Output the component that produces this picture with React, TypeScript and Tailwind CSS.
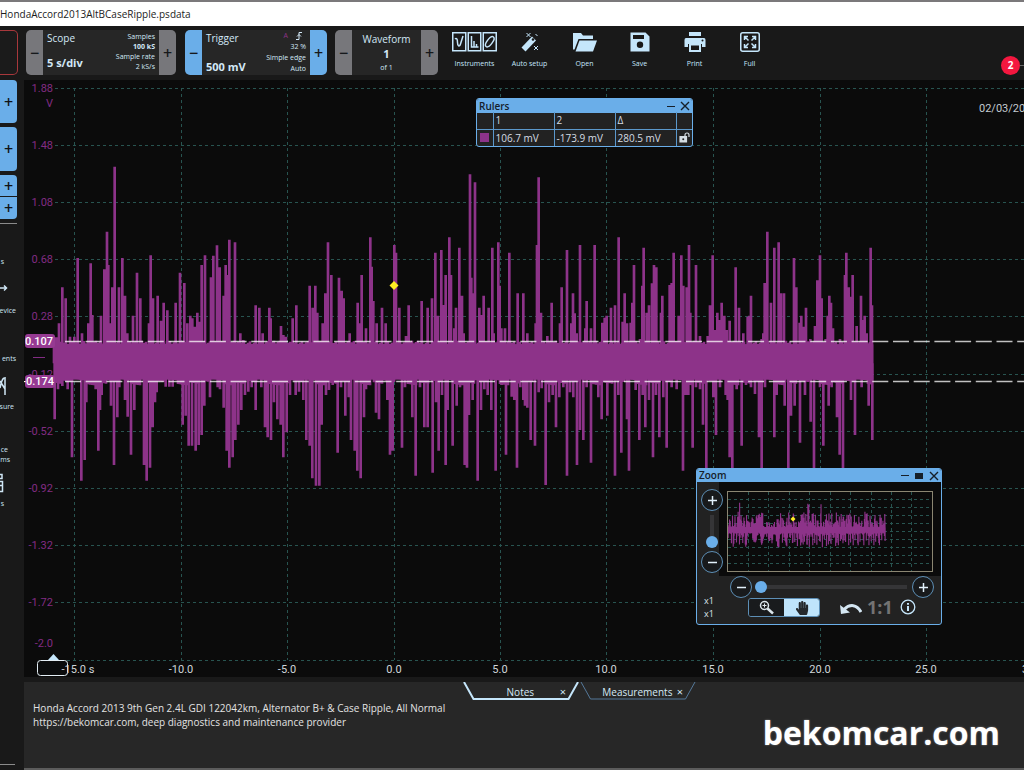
import type { ReactNode } from "react";
import clsx from "clsx";
import { FaHandPaper } from "react-icons/fa";

// Trace extremes as x, y pairs, three units to a pixel
const PEAKS_A = [
  12, 562, 20, 562, 27, 520, 37, 412, 47, 445, 60, 560, 73, 560, 83, 324, 96, 550, 115, 520, 122, 340, 127, 495,
  153, 497, 163, 358, 171, 245, 175, 345, 181, 520, 187, 412, 194, 50, 207, 412, 217, 324, 225, 437, 232, 550,
  249, 497, 261, 368, 271, 445, 297, 520, 302, 316, 309, 445, 323, 437, 333, 512, 341, 458, 352, 481, 377, 458,
  390, 368, 403, 399, 412, 520, 421, 497, 427, 505, 434, 530, 442, 488, 448, 515, 455, 345, 465, 316, 483, 382,
  490, 317, 501, 286, 509, 352, 521, 437, 527, 345, 533, 375, 538, 269, 555, 277, 571, 550, 580, 570, 617, 466,
  628, 473, 638, 550, 658, 473, 662, 505, 693, 528, 700, 555, 708, 560, 728, 505, 739, 466, 779, 407, 788, 473,
  796, 407, 802, 488, 818, 520, 826, 430, 834, 277, 844, 375, 867, 383, 875, 422, 881, 445, 899, 550, 923, 458,
  930, 520, 935, 375, 948, 535, 961, 262, 965, 350, 970, 453, 980, 520, 996, 473, 1007, 520, 1033, 285, 1038, 308,
  1048, 473, 1068, 558, 1076, 466, 1115, 453, 1133, 473, 1146, 445, 1156, 308, 1164, 497, 1174, 300, 1179, 465,
  1187, 375, 1198, 262, 1203, 375, 1213, 535, 1218, 473, 1228, 293, 1236, 437,
];
const PEAKS_B = [
  11, 550, 30, 73, 34, 383, 38, 430, 45, 97, 58, 473, 65, 495, 71, 437, 86, 473, 97, 293, 101, 550, 115, 277,
  119, 407, 124, 535, 135, 535, 148, 308, 173, 430, 190, 430, 202, 550, 227, 520, 231, 285, 236, 82, 243, 488,
  262, 558, 275, 458, 300, 520, 305, 412, 321, 300, 334, 520, 339, 430, 344, 490, 350, 550, 360, 285, 376, 535,
  380, 453, 393, 535, 404, 285, 427, 518, 434, 503, 440, 497, 453, 473, 465, 466, 476, 262, 488, 515, 494, 430,
  501, 520, 512, 518, 517, 458, 522, 345, 540, 567, 547, 407, 551, 293, 560, 488, 567, 466, 576, 400, 582, 345,
  589, 352, 603, 488, 607, 437, 629, 405, 635, 399, 641, 308, 656, 497, 664, 316, 670, 407, 680, 412, 687, 285,
  691, 488, 708, 345, 720, 558, 743, 558, 750, 466, 758, 316, 766, 540, 772, 488, 780, 510, 785, 458, 793, 497,
  800, 540, 809, 512, 827, 352, 837, 473, 850, 550, 863, 500, 868, 497, 873, 437, 905, 567, 910, 550, 914, 399,
  922, 245, 933, 458, 943, 293, 956, 277, 963, 430, 972, 430, 1002, 324, 1009, 412, 1019, 518, 1024, 497,
  1030, 530, 1038, 473, 1051, 567, 1065, 528, 1072, 391, 1080, 316, 1085, 445, 1097, 567, 1103, 497, 1108, 437,
  1113, 458, 1119, 535, 1140, 567, 1155, 375, 1159, 308, 1166, 412, 1172, 440, 1178, 375, 1190, 528, 1203, 437,
  1208, 510, 1214, 497, 1220, 550, 1232, 293, 1236, 466,
];
const DIPS_A = [
  14, 808, 24, 718, 37, 708, 53, 718, 66, 922, 94, 992, 104, 930, 109, 757, 137, 718, 145, 902, 150, 780, 155, 735,
  183, 767, 192, 945, 202, 802, 208, 712, 225, 750, 233, 800, 243, 914, 253, 780, 282, 945, 290, 992, 300, 953,
  308, 832, 315, 757, 320, 727, 347, 710, 358, 710, 368, 710, 398, 824, 407, 797, 416, 887, 426, 887, 437, 902,
  446, 885, 455, 855, 463, 767, 480, 742, 503, 712, 510, 718, 521, 773, 530, 902, 538, 953, 548, 922, 556, 870,
  565, 824, 574, 780, 585, 735, 595, 725, 605, 712, 617, 780, 634, 712, 645, 832, 653, 862, 663, 870, 672, 757,
  682, 808, 692, 824, 700, 922, 710, 847, 720, 735, 737, 735, 747, 725, 760, 750, 769, 870, 779, 887, 787, 985,
  798, 1007, 808, 1007, 815, 824, 828, 735, 837, 720, 848, 705, 863, 908, 873, 712, 886, 797, 896, 742, 903, 870,
  914, 902, 922, 962, 932, 985, 942, 802, 948, 718, 978, 788, 987, 808, 1012, 750, 1020, 914, 1028, 902, 1056, 893,
  1065, 712, 1087, 802, 1097, 977, 1110, 712, 1123, 832, 1133, 832, 1148, 968, 1158, 757, 1166, 902, 1176, 735,
  1187, 945, 1193, 780, 1208, 887, 1220, 767, 1230, 712,
];
const DIPS_B = [
  14, 945, 21, 953, 27, 795, 38, 750, 53, 992, 63, 780, 73, 718, 83, 735, 94, 780, 107, 962, 125, 705, 138, 914,
  155, 740, 163, 750, 171, 953, 181, 712, 190, 750, 195, 767, 202, 773, 212, 870, 225, 887, 236, 727, 245, 715,
  257, 1005, 267, 757, 278, 735, 288, 832, 298, 742, 310, 712, 321, 977, 330, 727, 340, 742, 351, 945, 360, 840,
  370, 870, 380, 712, 393, 938, 415, 742, 425, 808, 442, 797, 465, 977, 475, 735, 484, 908, 501, 808, 507, 962,
  527, 720, 538, 870, 548, 735, 556, 832, 567, 750, 579, 922, 588, 735, 598, 862, 610, 742, 620, 893, 635, 712,
  650, 718, 669, 962, 677, 735, 685, 735, 698, 893, 708, 712, 720, 718, 729, 824, 739, 960, 760, 742, 768, 855,
  780, 712, 797, 735, 803, 750, 809, 922, 817, 960, 830, 718, 845, 887, 858, 705, 873, 712, 885, 732, 897, 862,
  905, 960, 915, 712, 943, 862, 950, 735, 974, 767, 985, 960, 993, 797, 1004, 767, 1020, 878, 1035, 735, 1052, 815,
  1062, 960, 1080, 712, 1090, 887, 1106, 767, 1115, 712, 1131, 802, 1139, 914, 1149, 960, 1173, 750, 1185, 855,
  1205, 712, 1226, 767, 1237, 870,
];

function spikes(data: number[], offset: number) {
  let d = "";
  for (let i = 0; i < data.length; i += 2) {
    d += `M${data[i] + offset} 640V${data[i + 1]}`;
  }
  return d;
}

// small uneven edge along the solid band
function noise() {
  let d = "";
  for (let x = 18; x < 2468; x += 6) {
    const n = (x * 7919) % 23;
    d += `M${x} ${572 + (n % 12)}V${686 + ((n * 5) % 21)}`;
  }
  return d;
}

const TRACE =
  spikes(PEAKS_A, 0) + spikes(PEAKS_B, 1230) + spikes(DIPS_A, 0) + spikes(DIPS_B, 1230) + noise();

function Trace({ width }: { width: number }) {
  return (
    <g fill="#8d3389" stroke="#8d3389">
      <rect x="12" y="583" width="2458" height="106" stroke="none" />
      <path d={TRACE} fill="none" strokeWidth={width} />
    </g>
  );
}

const yLabels = [
  { y: 8, text: "1.88" },
  { y: 65, text: "1.48" },
  { y: 122, text: "1.08" },
  { y: 179, text: "0.68" },
  { y: 236, text: "0.28" },
  { y: 294, text: "-0.12" },
  { y: 351, text: "-0.52" },
  { y: 408, text: "-0.92" },
  { y: 465, text: "-1.32" },
  { y: 522, text: "-1.72" },
  { y: 563, text: "-2.0" },
];

const xLabels = [
  { x: 50, text: "-15.0 s" },
  { x: 157, text: "-10.0" },
  { x: 263, text: "-5.0" },
  { x: 370, text: "0.0" },
  { x: 476, text: "5.0" },
  { x: 582, text: "10.0" },
  { x: 689, text: "15.0" },
  { x: 796, text: "20.0" },
  { x: 902, text: "25.0" },
];

const gridRows = [8, 65, 122, 179, 236, 294, 351, 408, 465, 522, 580];

function Plot() {
  return (
    <svg className="block h-full w-full font-['Roboto',sans-serif] text-[11px]" role="img" aria-label="Channel A trace">
      <g stroke="#285450" strokeDasharray="3 3">
        {gridRows.map((y) => (
          <line key={y} x1="31" x2="100%" y1={y + 0.5} y2={y + 0.5} />
        ))}
        {xLabels.map(({ x }) => (
          <line key={x} x1={x + 0.5} x2={x + 0.5} y1="8" y2="580" />
        ))}
      </g>
      <g fill="#822c83" textAnchor="end">
        {yLabels.map(({ y, text }) => (
          <text key={text} x="29" y={y + 4}>{text}</text>
        ))}
        <text x="29" y="27">V</text>
      </g>
      <path d="M9 277.5h12" stroke="#822c83" />
      <g transform="translate(26 70) scale(0.33333)">
        <Trace width={8} />
      </g>
      <g stroke="#fff" strokeOpacity="0.75" strokeWidth="1.5" strokeDasharray="16 4.7">
        <line x1="41" x2="100%" y1="261.5" y2="261.5" />
        <line x1="41" x2="100%" y1="301.5" y2="301.5" />
      </g>
      <g fill="#963a92">
        <rect x="1" y="254" width="30" height="14" rx="3" />
        <rect x="1" y="295" width="30" height="13" rx="3" />
      </g>
      <g fill="#fff" textAnchor="end" fontWeight="500">
        <text x="29" y="265">0.107</text>
        <text x="30" y="305">-0.174</text>
      </g>
      <path d="M370 201l4.5 4.5-4.5 4.5-4.5-4.5z" fill="#ffee22" />
      <rect x="13.5" y="580.5" width="30" height="15" rx="3" fill="#0b0c0d" stroke="#e4eef5" />
      <path d="M24 580l5.500-6 5.500 6z" fill="#c5e6fb" />
      <g fill="#d0d6da" textAnchor="middle">
        {xLabels.map(({ x, text }) => (
          <text key={x} x={x === 50 ? 54 : x} y="593">{text}</text>
        ))}
        <text x="998" y="593" textAnchor="start">30.0</text>
      </g>
      <text x="955" y="32" fill="#c3cad0">02/03/2021</text>
    </svg>
  );
}

function Stepper({ tone, label, className, children }: { tone: "gray" | "blue"; label: string; className: string; children: ReactNode }) {
  const btn = clsx(
    "flex w-[17px] shrink-0 items-center justify-center text-base leading-none font-semibold text-[#16191c]",
    tone === "blue" ? "bg-[#6aaee9]" : "bg-[#77777b]",
  );
  return (
    <div className={clsx("flex h-[45px] overflow-hidden rounded-[5px] bg-[#262626] text-[#d3e8f7]", className)}>
      <button className={btn} aria-label={`${label} down`}>−</button>
      <div className="flex min-w-0 flex-1 justify-between px-1">{children}</div>
      <button className={btn} aria-label={`${label} up`}>+</button>
    </div>
  );
}

function Tool({ label, className, children }: { label: string; className?: string; children: ReactNode }) {
  return (
    <button className={clsx("flex w-[55px] flex-col items-center text-[#c5e6fb]", className)}>
      <span className="flex h-5 items-center">{children}</span>
      <span className="mt-[7px] text-[7px] leading-[10px] whitespace-nowrap">{label}</span>
    </button>
  );
}

function Toolbar() {
  return (
    <header className="flex h-[54px] items-start overflow-hidden bg-[#191919] pt-1">
      <button aria-label="Stop" className="h-[45px] w-[18px] shrink-0 rounded-r-[5px] border border-l-0 border-[#a8383c] bg-[#1b1b1b]" />
      <Stepper tone="gray" label="Scope" className="ml-2 w-[150px] shrink-0">
        <div className="flex flex-col justify-between pb-1">
          <span className="text-[10px] leading-4">Scope</span>
          <b className="text-[11px] leading-4">5 s/div</b>
        </div>
        <div className="pt-0.5 text-right text-[7px] leading-[10px]">
          <div>Samples</div>
          <b>100 kS</b>
          <div>Sample rate</div>
          <div>2 kS/s</div>
        </div>
      </Stepper>
      <Stepper tone="blue" label="Trigger" className="ml-[9px] w-[142px] shrink-0">
        <div className="flex flex-col justify-between">
          <span className="text-[10px] leading-4">Trigger</span>
          <b className="text-[11px] leading-4 whitespace-nowrap">500 mV</b>
        </div>
        <div className="text-right text-[7px] leading-[11px]">
          <div className="flex items-center justify-end gap-2 pr-1">
            <span className="text-[#8d3389]">A</span>
            <svg width="6" height="8" viewBox="0 0 6 8" fill="none" stroke="currentColor">
              <path d="M0 7.500h3V.5h3M1 4.500l2-2 2 2" />
            </svg>
          </div>
          <div>32 %</div>
          <div className="whitespace-nowrap">Simple edge</div>
          <div>Auto</div>
        </div>
      </Stepper>
      <Stepper tone="gray" label="Waveform" className="ml-2 w-[103px] shrink-0">
        <div className="w-full pt-0.5 text-center">
          <div className="text-[10px] leading-[14px]">Waveform</div>
          <b className="block text-[11px] leading-4">1</b>
          <div className="text-[7px] leading-3">of 1</div>
        </div>
      </Stepper>
      <nav className="ml-[9px] flex shrink-0 pt-0.5">
        <Tool label="Instruments">
          <svg width="45" height="20" viewBox="0 0 45 20" fill="none" stroke="currentColor" strokeWidth="1.500">
            <path d="M.75.75h13v18h-13zM16.250.75h12.500v18H16.250zM31.250.75h13v18h-13z" />
            <path d="M3 7c1.500-1.500 2.500 0 2.500 3.500s2 5 3 1.500l2.500-8M19.500 4v11h7M22 15V9M24.500 15v-3" />
            <ellipse cx="37.750" cy="9.750" rx="2.600" ry="6" transform="rotate(38 37.750 9.750)" />
          </svg>
        </Tool>
        <Tool label="Auto setup">
          <svg width="20" height="20" viewBox="0 0 20 20" fill="none" stroke="currentColor">
            <path d="M3.500 17.500L14 6.500" strokeWidth="5.500" />
            <circle cx="13" cy="7.500" r="1.300" fill="#191919" stroke="none" />
            <path d="M6.500 1l4 4M10.500 1l-4 4M14 14l4 4M18 14l-4 4M15.500 2l2 2" />
          </svg>
        </Tool>
        <Tool label="Open">
          <svg width="24" height="20" viewBox="0 0 24 20" fill="currentColor">
            <path d="M0 1h8l2 2.500h10V7H5.500L1.500 17.500H0z" />
            <path d="M6.500 8.500H24L20 19.500H2.500z" />
          </svg>
        </Tool>
        <Tool label="Save">
          <svg width="20" height="20" viewBox="0 0 20 20" fill="currentColor">
            <path d="M.5.5h15l4 4v15H.5zM3 3v4h11V3zM10 9.500a3.200 3.200 0 100 6.400 3.200 3.200 0 000-6.400z" fillRule="evenodd" />
          </svg>
        </Tool>
        <Tool label="Print">
          <svg width="22" height="20" viewBox="0 0 22 20" fill="currentColor">
            <path d="M5 0h12v4H5zM2 6h18q1.500 0 1.500 2v7H18v-3H4v3H.5V8Q.5 6 2 6z" />
            <path d="M5 12h12v8H5zM7 13.500v4.500h8v-4.500z" fillRule="evenodd" />
            <circle cx="18.500" cy="8.500" r="1" fill="#191919" />
          </svg>
        </Tool>
        <Tool label="Full">
          <svg width="20" height="20" viewBox="0 0 20 20" fill="none" stroke="currentColor" strokeWidth="1.500">
            <rect x=".75" y=".75" width="18.500" height="18.500" rx="2" />
            <path d="M4.500 8V4.500H8M4.500 4.500l4 4M12 4.500h3.500V8M15.500 4.500l-4 4M4.500 12v3.500H8M4.500 15.500l4-4M15.500 12v3.500H12M15.500 15.500l-4-4" />
          </svg>
        </Tool>
      </nav>
      <div className="mt-[26px] ml-auto flex items-center">
        <span className="flex size-[19px] items-center justify-center rounded-full bg-[#f4173f] text-[10px] font-bold text-white">2</span>
        <span className="h-px w-1 bg-[#666]" />
      </div>
    </header>
  );
}

function Sidebar() {
  const plus = "flex w-[17px] items-center justify-center bg-[#6aaee9] text-base leading-none font-semibold text-[#101316]";
  return (
    <aside className="flex w-6 shrink-0 flex-col bg-[#191919] text-[7px] leading-[10px] text-[#cfe6f5]">
      <button className={clsx(plus, "h-[43px] rounded-r")} aria-label="Channel A">+</button>
      <button className={clsx(plus, "mt-1 h-11 rounded-r")} aria-label="Channel B">+</button>
      <button className={clsx(plus, "mt-1 h-[21px] rounded-tr")} aria-label="Channel C">+</button>
      <button className={clsx(plus, "mt-px h-[22px] rounded-br")} aria-label="Channel D">+</button>
      <div className="mt-1 h-px w-[17px] bg-[#8b8b8b]" />
      <div className="flex w-4 flex-col items-end">
        <span className="mt-[33px] mr-3">s</span>
        <svg className="mt-4 mr-2" width="8" height="10" viewBox="0 0 8 10" fill="none" stroke="currentColor" strokeWidth="1.500">
          <path d="M0 5h6M4 2.500L6.500 5 4 7.500" />
        </svg>
        <span className="mt-[13px]">evice</span>
        <span className="mt-[38px]">ents</span>
        <svg className="mt-3 mr-2.5" width="6" height="20" viewBox="0 0 6 20" fill="none" stroke="currentColor" strokeWidth="1.500">
          <path d="M0 5l5 8M5 1v18M0 12c1-5 2-9 4-10" />
        </svg>
        <span className="mt-1.5 mr-0.5">sure</span>
        <span className="mt-[33px] mr-2">ce</span>
        <span className="mr-1.5">ms</span>
        <svg className="mt-2 mr-3" width="4" height="20" viewBox="0 0 4 20" fill="none" stroke="currentColor">
          <path d="M0 1.500h2v4H0M0 8.500h2.500v10H0M0 12.500h2.500" strokeWidth="1.500" />
        </svg>
        <span className="mt-1.5 mr-3">s</span>
      </div>
      <div className="mt-auto mb-[5px] h-px w-[15px] bg-[#8b8b8b]" />
    </aside>
  );
}

function RulersWindow() {
  const cell = "h-[17px] border border-[#5b98cc] px-0.5";
  return (
    <section className="absolute top-[18px] left-[452px] w-[217px] overflow-hidden rounded-[3px] border border-[#6aaee9] bg-[#222222] text-[10px] text-[#d5dde3]">
      <div className="flex h-[14px] items-center bg-[#6aaee9] pl-0.5 text-[#16202a]">
        <h2 className="flex-1 text-[10px] leading-[13px] font-semibold">Rulers</h2>
        <button aria-label="Minimise rulers" className="mr-[5px] h-px w-2 bg-[#16202a]" />
        <button aria-label="Close rulers" className="mr-0.5">
          <CloseIcon />
        </button>
      </div>
      <table className="-mt-px w-full table-fixed border-collapse border-hidden leading-4">
        <colgroup>
          <col className="w-4" />
          <col />
          <col />
          <col />
          <col className="w-4" />
        </colgroup>
        <tbody>
          <tr>
            <td className={cell} />
            <th className={clsx(cell, "text-left font-normal")}>1</th>
            <th className={clsx(cell, "text-left font-normal")}>2</th>
            <th className={clsx(cell, "text-left font-normal")}>Δ</th>
            <td className={cell} />
          </tr>
          <tr>
            <td className={cell}><div className="mx-auto size-[9px] bg-[#8d3389]" /></td>
            <td className={cell}>106.7 mV</td>
            <td className={cell}>-173.9 mV</td>
            <td className={cell}>280.5 mV</td>
            <td className={cell}>
              <button aria-label="Lock rulers" className="block">
                <svg width="11" height="11" viewBox="0 0 11 11" fill="none" stroke="currentColor" strokeWidth="1.200">
                  <path d="M1 4.500h6.500v5.500H1z" fill="currentColor" />
                  <path d="M6 4.500V3a2 2 0 014 0v2" />
                  <circle cx="4.250" cy="7.200" r="1" fill="#222" stroke="none" />
                </svg>
              </button>
            </td>
          </tr>
        </tbody>
      </table>
    </section>
  );
}

function CloseIcon() {
  return (
    <svg className="block" width="10" height="10" viewBox="0 0 10 10" stroke="currentColor" strokeWidth="1.400">
      <path d="M1 1l8 8M9 1L1 9" />
    </svg>
  );
}

function RoundButton({ sign, label }: { sign: "+" | "-"; label: string }) {
  return (
    <button aria-label={label} className="flex size-[22px] shrink-0 items-center justify-center rounded-full border border-[#5d8fb6] bg-[#181a1c] text-[#e2f1fb]">
      <svg width="9" height="9" viewBox="0 0 9 9" stroke="currentColor" strokeWidth="1.500">
        <path d={sign === "+" ? "M0 4.500h9M4.500 0v9" : "M0 4.500h9"} />
      </svg>
    </button>
  );
}

const thumb =
  "[&::-webkit-slider-thumb]:size-3 [&::-webkit-slider-thumb]:appearance-none [&::-webkit-slider-thumb]:rounded-full [&::-webkit-slider-thumb]:bg-[#6aaee9]";

function ZoomWindow() {
  return (
    <section className="absolute top-[388px] left-[672px] w-[246px] overflow-hidden rounded-[3px] border border-[#6aaee9] bg-[#222222] text-[#dce6ec]">
      <div className="flex h-[13px] items-center bg-[#6aaee9] pl-0.5 text-[#16202a]">
        <h2 className="flex-1 text-[10px] leading-[13px] font-semibold">Zoom</h2>
        <button aria-label="Minimise zoom" className="mr-1.5 h-px w-2 bg-[#16202a]" />
        <button aria-label="Restore zoom" className="mr-1.5 h-1.5 w-2 bg-[#16202a]" />
        <button aria-label="Close zoom" className="mr-0.5">
          <CloseIcon />
        </button>
      </div>
      <div className="flex">
        <div className="relative z-10 flex w-[22px] shrink-0 flex-col items-start pt-[7px] pl-1">
          <RoundButton sign="+" label="Zoom in vertically" />
          <input
            type="range"
            aria-label="Vertical zoom"
            defaultValue={0}
            className={clsx(
              "mb-[3px] ml-[5px] h-[37px] w-3 appearance-none bg-[linear-gradient(#353537,#353537)] bg-[length:4px_80%] bg-center bg-no-repeat [direction:rtl] [writing-mode:vertical-lr]",
              thumb,
            )}
          />
          <RoundButton sign="-" label="Zoom out vertically" />
        </div>
        <div className="h-[94px] flex-1 bg-[#0b0b0b] pt-[9px] pl-2">
          <svg width="206" height="81" viewBox="0 0 206 81" className="block">
            <g stroke="#285450" strokeDasharray="3 3">
              {[8, 16, 24, 32, 40, 48, 56, 64, 72].map((y) => (
                <path key={y} d={`M1 ${y + 0.5}h204`} />
              ))}
              {[21, 41, 62, 82, 103, 123, 144, 164, 184].map((x) => (
                <path key={x} d={`M${x + 0.5} 1v79`} />
              ))}
            </g>
            <g transform="translate(0.2 9.3) scale(0.064 0.0467)">
              <Trace width={18} />
            </g>
            <rect x=".5" y=".5" width="205" height="80" fill="none" stroke="#8b8672" />
            <path d="M66 25.500l2.500 2.500-2.500 2.500-2.500-2.500z" fill="#ffee22" />
          </svg>
        </div>
      </div>
      <div className="flex items-center pr-[7px] pl-[33px]">
        <RoundButton sign="-" label="Zoom out horizontally" />
        <input
          type="range"
          aria-label="Horizontal zoom"
          defaultValue={0}
          className={clsx(
            "mr-[5px] ml-[3px] h-3 min-w-0 flex-1 appearance-none bg-[linear-gradient(#353537,#353537)] bg-[length:100%_4px] bg-center bg-no-repeat",
            thumb,
          )}
        />
        <RoundButton sign="+" label="Zoom in horizontally" />
      </div>
      <div className="flex h-[26px] items-start">
        <div className="-mt-1 w-[51px] pl-[7px] text-[9px] leading-[13px]">
          <div>x1</div>
          <div>x1</div>
        </div>
        <div className="flex h-[19px] w-[72px] overflow-hidden rounded-[3px] border border-[#5d8fb6]">
          <button aria-label="Zoom tool" className="flex flex-1 items-center justify-center bg-[#191b1d]">
            <svg width="17" height="15" viewBox="0 0 17 15" fill="none" stroke="currentColor" strokeWidth="1.500">
              <circle cx="6.500" cy="5.500" r="4" />
              <path d="M4.500 5.500h4M6.500 3.500v4" strokeWidth="1" />
              <path d="M9.500 8.500l5.500 5" strokeWidth="2.500" />
            </svg>
          </button>
          <button aria-label="Pan tool" className="flex flex-1 items-center justify-center bg-[#bfe4fb] text-[#24282c]">
            <FaHandPaper size={14} />
          </button>
        </div>
        <button aria-label="Undo zoom" className="mt-[3px] ml-5">
          <svg width="22" height="14" viewBox="0 0 22 14" fill="none">
            <path d="M4 8.500c6-6 13-5 17 2.500" stroke="#d4e6f2" strokeWidth="3" />
            <path d="M0 4l1 9 9-1.500z" fill="#d4e6f2" />
          </svg>
        </button>
        <button className="ml-[5px] text-[18px] leading-[18px] font-bold text-[#737373]">1:1</button>
        <button aria-label="Zoom help" className="mt-px mr-[25px] ml-auto">
          <svg className="block" width="16" height="16" viewBox="0 0 16 16" fill="none" stroke="#c5e6fb">
            <circle cx="8" cy="8" r="6.800" strokeWidth="1.300" />
            <path d="M8 4v1.700M8 7v5" strokeWidth="2" />
          </svg>
        </button>
      </div>
    </section>
  );
}

function Tab({ label, active, className }: { label: string; active?: boolean; className: string }) {
  return (
    <div className={clsx("relative flex h-[18px] items-center pt-0.5 text-[10px] text-[#d5e9f6]", className)}>
      <svg
        className="absolute inset-0"
        width="117"
        height="18"
        viewBox="0 0 117 18"
        fill="none"
        stroke={active ? "#c5e6fb" : "#55799a"}
        strokeWidth={active ? 2 : 1}
      >
        <path d="M1 0l9.500 17h95L115 0" />
      </svg>
      <button role="tab" aria-selected={!!active} className="relative flex-1 text-center">{label}</button>
      <button aria-label={`Close ${label}`} className="relative text-[11px] leading-3">×</button>
    </div>
  );
}

export default function App() {
  return (
    <div className="flex min-h-screen flex-col bg-[#191919] font-['Open_Sans','Noto_Sans',sans-serif]">
      <div className="h-0.5 bg-[#7b797b]" />
      <h1 className="h-6 bg-white text-[10px] leading-6 text-[#1c1c1c]">HondaAccord2013AltBCaseRipple.psdata</h1>
      <Toolbar />
      <div className="flex flex-1">
        <Sidebar />
        <main className="flex min-w-0 flex-1 flex-col">
          <div className="relative h-[597px] overflow-hidden bg-[#0b0b0b]">
            <Plot />
            <RulersWindow />
            <ZoomWindow />
          </div>
          <section className="mt-[5px] flex flex-1 flex-col border-b-2 border-[#5c5c5c] bg-[#272727]">
            <div role="tablist" className="flex pl-[439px]">
              <Tab label="Notes" active className="w-[117px] pr-3.5 pl-[18px]" />
              <Tab label="Measurements" className="w-[117px] pr-3.5 pl-[18px]" />
            </div>
            <div className="flex flex-1 items-start justify-between pr-6 pl-[9px]">
              <p className="pt-px text-[10px] leading-[14px] text-[#e3e3e3]">
                Honda Accord 2013 9th Gen 2.4L GDI 122042km, Alternator B+ &amp; Case Ripple, All Normal
                <br />
                https://bekomcar.com, deep diagnostics and maintenance provider
              </p>
              <strong className="mt-2.5 text-[32px] leading-[46px] text-white [text-shadow:0_0_2px_#888]">bekomcar.com</strong>
            </div>
          </section>
        </main>
      </div>
    </div>
  );
}
